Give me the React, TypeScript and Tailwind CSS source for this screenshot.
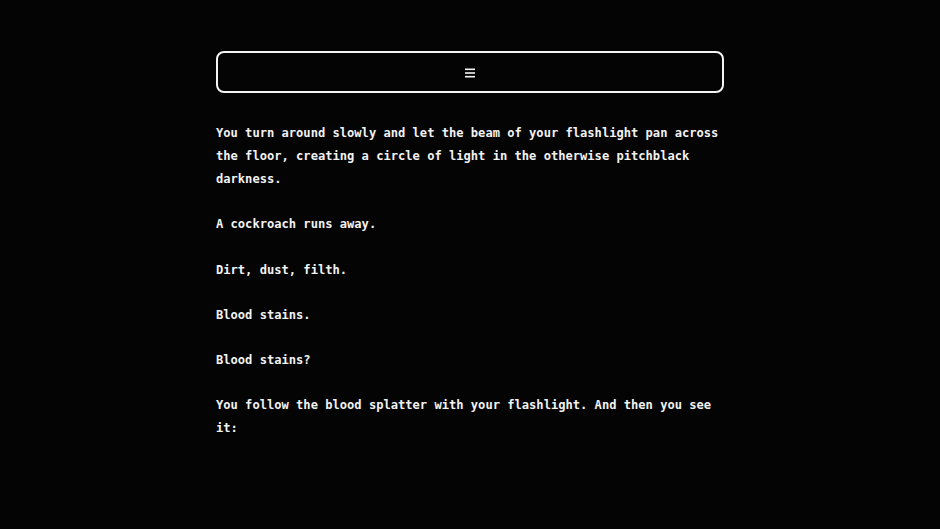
export default function App() {
  const paragraphs = [
    "You turn around slowly and let the beam of your flashlight pan across the floor, creating a circle of light in the otherwise pitchblack darkness.",
    "A cockroach runs away.",
    "Dirt, dust, filth.",
    "Blood stains.",
    "Blood stains?",
    "You follow the blood splatter with your flashlight. And then you see it:",
  ];
  return (
    <div className="min-h-[529px] w-full bg-[#040404] text-[#f2f2f2] font-['DejaVu_Sans_Mono','Liberation_Mono',monospace]">
      <div className="mx-auto w-[508px] pt-[51px]">
        <button className="flex h-[42px] w-full items-center justify-center rounded-[8px] border-2 border-[#f4f4f4] bg-transparent">
          <svg width="10" height="10" viewBox="0 0 10 10" className="mt-[2px]">
            <rect x="0" y="0.5" width="10" height="1.6" fill="#f4f4f4" />
            <rect x="0" y="4.2" width="10" height="1.6" fill="#f4f4f4" />
            <rect x="0" y="7.9" width="10" height="1.6" fill="#f4f4f4" />
          </svg>
        </button>
        <div className="mt-[29px] text-[12.1px] font-bold leading-[23px]">
          {paragraphs.map((p, i) => (
            <p key={i} className="mb-[22.3px]">
              {p}
            </p>
          ))}
        </div>
      </div>
    </div>
  );
}
